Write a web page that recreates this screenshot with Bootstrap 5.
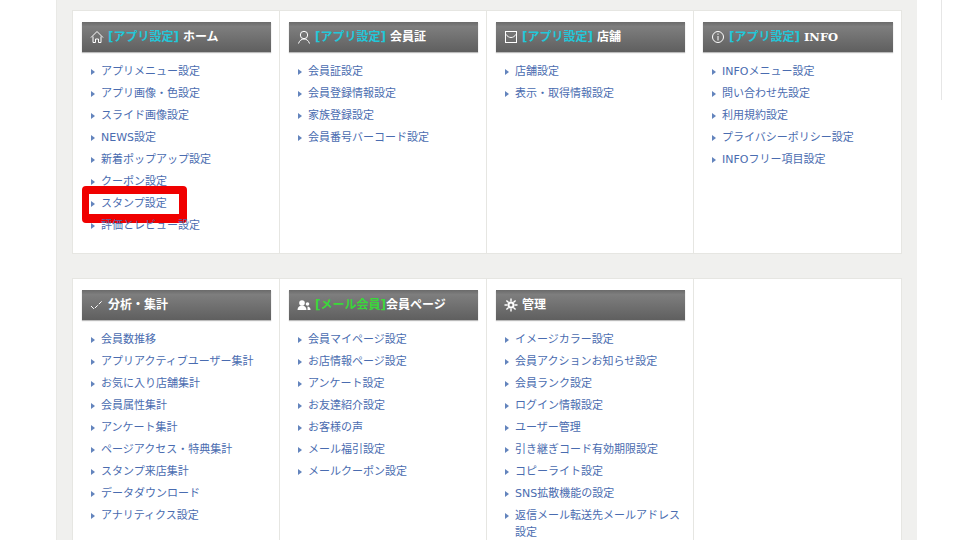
<!DOCTYPE html>
<html lang="ja">
<head>
<meta charset="utf-8">
<title>アプリ設定</title>
<link href="https://cdn.jsdelivr.net/npm/bootstrap@5.3.0/dist/css/bootstrap.min.css" rel="stylesheet">
<style>
html,body{height:540px;overflow:hidden;background:#fff}
body{font-family:"DejaVu Sans","Noto Sans CJK JP",sans-serif;font-size:11px;line-height:17px}
.page-wrap{padding-left:56px;height:540px}
.band{width:861px;background:#f0f0ee;padding:10px 15px 0 15px;height:540px;border-left:1px solid #e9e9e6}
.aside-line{width:1px;height:100px;background:#e6e6e6;margin-left:24px}
.panel-grid{display:grid;grid-template-columns:repeat(4,1fr);background:#fff;border:1px solid #e6e6e2;margin-bottom:24px}
.panel-cell{padding:11px 8px 12px 9px;border-right:1px solid #e6e6e2;min-height:242px}
.panel-cell:last-child{border-right:0}
.head-bar{height:30px;background:linear-gradient(#6a6a6a,#7e7e7e 15%,#5f5f5f);box-shadow:0 1px 1px #bbb;color:#fff;font-size:12px;font-weight:700;padding-left:8px;margin-bottom:11px;white-space:nowrap}
.head-bar svg{flex:none;margin-right:4px}
.tag-app{color:#22c7d9;margin-right:4px}
.tag-mail{color:#3ad83a}
.menu-list{margin:0;padding:0 0 0 19px;list-style:none}
.menu-list li{position:relative;margin-bottom:5px}
.menu-list li::before{content:"";position:absolute;left:-10px;top:6px;border-left:4px solid #6384bd;border-top:3px solid transparent;border-bottom:3px solid transparent}
.menu-list a{color:#4a6cb0;text-decoration:none}
.mark-box{position:absolute;left:-19px;top:-9px;width:105px;height:37px;border-style:solid;border-color:#f00000;border-width:8px 8px 9px 7px;border-radius:4px}
.head-font{font-family:"DejaVu Serif","Noto Sans CJK JP",serif;font-size:11.5px}
</style>
</head>
<body>
<div class="page-wrap d-flex">
  <main class="band">
    <section class="panel-grid">
      <div class="panel-cell">
        <div class="head-bar d-flex align-items-center">
          <svg width="14" height="14" viewBox="0 0 14 14" fill="none" stroke="#fff"><path d="M1 7.500 7 1.500l6 6M3 6.500V12.500H5.500V9H8.500V12.500H11V6.500"/></svg>
          <span><span class="tag-app">[アプリ設定]</span>ホーム</span>
        </div>
        <ul class="menu-list">
          <li><a href="#">アプリメニュー設定</a></li>
          <li><a href="#">アプリ画像・色設定</a></li>
          <li><a href="#">スライド画像設定</a></li>
          <li><a href="#">NEWS設定</a></li>
          <li><a href="#">新着ポップアップ設定</a></li>
          <li><a href="#">クーポン設定</a></li>
          <li><a href="#">スタンプ設定</a><span class="mark-box"></span></li>
          <li><a href="#">評価とレビュー設定</a></li>
        </ul>
      </div>
      <div class="panel-cell">
        <div class="head-bar d-flex align-items-center">
          <svg width="14" height="14" viewBox="0 0 14 14" fill="none" stroke="#fff"><circle cx="7" cy="5" r="3.700"/><path d="M1.500 13.500C2.500 10.500 4.500 9 7 9s4.500 1.500 5.500 4.500"/></svg>
          <span><span class="tag-app">[アプリ設定]</span>会員証</span>
        </div>
        <ul class="menu-list">
          <li><a href="#">会員証設定</a></li>
          <li><a href="#">会員登録情報設定</a></li>
          <li><a href="#">家族登録設定</a></li>
          <li><a href="#">会員番号バーコード設定</a></li>
        </ul>
      </div>
      <div class="panel-cell">
        <div class="head-bar d-flex align-items-center">
          <svg width="14" height="14" viewBox="0 0 14 14" fill="none" stroke="#fff"><rect x="1.500" y="1.500" width="11" height="11"/><path d="M1.500 4c2 2.500 3.500 3.500 5.500 3.500S10.500 6.500 12.500 4"/></svg>
          <span><span class="tag-app">[アプリ設定]</span>店舗</span>
        </div>
        <ul class="menu-list">
          <li><a href="#">店舗設定</a></li>
          <li><a href="#">表示・取得情報設定</a></li>
        </ul>
      </div>
      <div class="panel-cell">
        <div class="head-bar d-flex align-items-center">
          <svg width="14" height="14" viewBox="0 0 14 14" fill="none" stroke="#fff"><circle cx="7" cy="7" r="5.500"/><path d="M7 6v4.500M7 3.500v1.300"/></svg>
          <span><span class="tag-app">[アプリ設定]</span><span class="head-font">INFO</span></span>
        </div>
        <ul class="menu-list">
          <li><a href="#">INFOメニュー設定</a></li>
          <li><a href="#">問い合わせ先設定</a></li>
          <li><a href="#">利用規約設定</a></li>
          <li><a href="#">プライバシーポリシー設定</a></li>
          <li><a href="#">INFOフリー項目設定</a></li>
        </ul>
      </div>
    </section>
    <section class="panel-grid">
      <div class="panel-cell">
        <div class="head-bar d-flex align-items-center">
          <svg width="14" height="14" viewBox="0 0 14 14" fill="none" stroke="#fff"><path d="M1 8 4 11 12 3" stroke-dasharray="4 1.500"/></svg>
          <span>分析・集計</span>
        </div>
        <ul class="menu-list">
          <li><a href="#">会員数推移</a></li>
          <li><a href="#">アプリアクティブユーザー集計</a></li>
          <li><a href="#">お気に入り店舗集計</a></li>
          <li><a href="#">会員属性集計</a></li>
          <li><a href="#">アンケート集計</a></li>
          <li><a href="#">ページアクセス・特典集計</a></li>
          <li><a href="#">スタンプ来店集計</a></li>
          <li><a href="#">データダウンロード</a></li>
          <li><a href="#">アナリティクス設定</a></li>
        </ul>
      </div>
      <div class="panel-cell">
        <div class="head-bar d-flex align-items-center">
          <svg width="14" height="14" viewBox="0 0 14 14" fill="#fff"><circle cx="5" cy="5" r="2.800"/><path d="M0.500 12c0-3 2-4.500 4.500-4.500S9.500 9 9.500 12z"/><circle cx="10.500" cy="6" r="1.800"/><path d="M10.500 8.500c1.800 0 3 1.200 3 3.500h-3z"/></svg>
          <span><span class="tag-mail">[メール会員]</span>会員ページ</span>
        </div>
        <ul class="menu-list">
          <li><a href="#">会員マイページ設定</a></li>
          <li><a href="#">お店情報ページ設定</a></li>
          <li><a href="#">アンケート設定</a></li>
          <li><a href="#">お友達紹介設定</a></li>
          <li><a href="#">お客様の声</a></li>
          <li><a href="#">メール福引設定</a></li>
          <li><a href="#">メールクーポン設定</a></li>
        </ul>
      </div>
      <div class="panel-cell">
        <div class="head-bar d-flex align-items-center">
          <svg width="14" height="14" viewBox="0 0 14 14" fill="none" stroke="#fff"><circle cx="7" cy="7" r="2.500" stroke-width="2"/><path d="M7 .5v3M7 10.500v3M.5 7h3M10.500 7h3M2.400 2.400l2.200 2.200M9.400 9.400l2.200 2.200M11.600 2.400 9.400 4.600M4.600 9.400l-2.200 2.200" stroke-width="1.400"/></svg>
          <span>管理</span>
        </div>
        <ul class="menu-list">
          <li><a href="#">イメージカラー設定</a></li>
          <li><a href="#">会員アクションお知らせ設定</a></li>
          <li><a href="#">会員ランク設定</a></li>
          <li><a href="#">ログイン情報設定</a></li>
          <li><a href="#">ユーザー管理</a></li>
          <li><a href="#">引き継ぎコード有効期限設定</a></li>
          <li><a href="#">コピーライト設定</a></li>
          <li><a href="#">SNS拡散機能の設定</a></li>
          <li><a href="#">返信メール転送先メールアドレス設定</a></li>
        </ul>
      </div>
      <div class="panel-cell"></div>
    </section>
  </main>
  <div class="aside-line"></div>
</div>
<script src="https://cdn.jsdelivr.net/npm/bootstrap@5.3.0/dist/js/bootstrap.bundle.min.js"></script>
</body>
</html>
